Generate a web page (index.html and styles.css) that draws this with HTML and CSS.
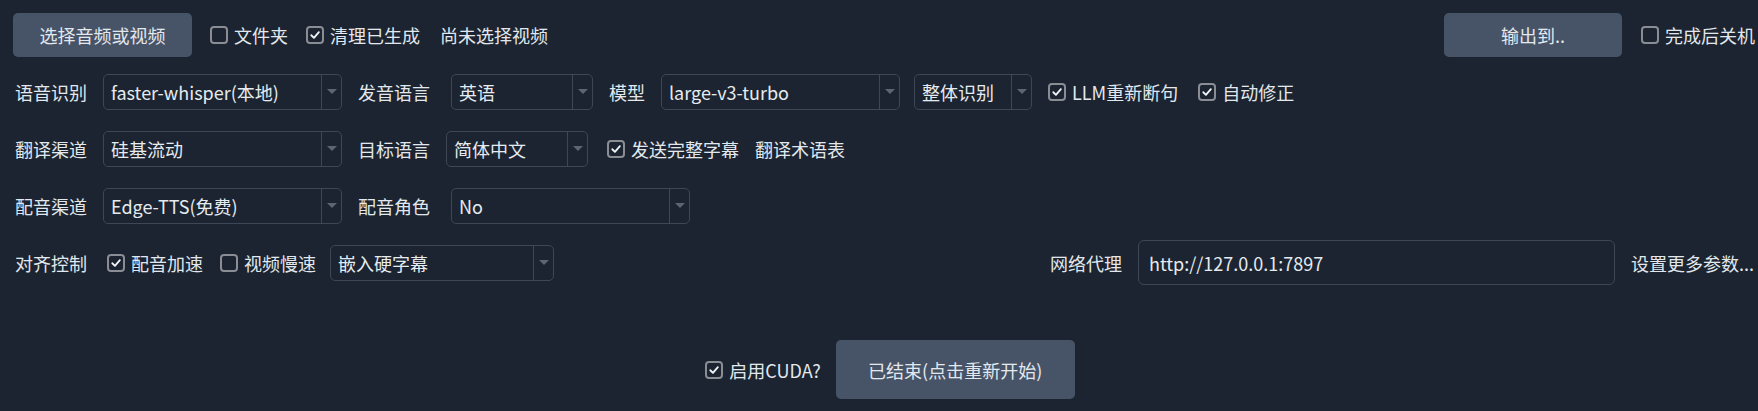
FILE: index.html
```html
<!DOCTYPE html>
<html lang="zh-CN">
<head>
  <meta charset="UTF-8">
  <meta name="viewport" content="width=device-width, initial-scale=1.0">
  <title>视频翻译配音</title>
  <link rel="stylesheet" href="styles.css">
</head>
<body>
<div class="panel">
  <div class="row">
    <div class="group">
      <button class="btn btn-pick">选择音频或视频</button>
      <label class="check"><span class="box"></span>文件夹</label>
      <label class="check"><span class="box"><svg viewBox="0 0 17 17"><path d="M4 8.8l3.2 3.2 6-7"/></svg></span>清理已生成</label>
      <span class="status">尚未选择视频</span>
    </div>
    <div class="group group-right">
      <button class="btn btn-out">输出到..</button>
      <label class="check"><span class="box"></span>完成后关机</label>
    </div>
  </div>

  <div class="row">
    <span class="lbl">语音识别</span>
    <div class="combo combo-main"><span class="combo-text">faster-whisper(本地)</span><span class="combo-arrow"></span></div>
    <span class="lbl lbl-wide">发音语言</span>
    <div class="combo combo-lang"><span class="combo-text">英语</span><span class="combo-arrow"></span></div>
    <span class="lbl">模型</span>
    <div class="combo combo-main"><span class="combo-text">large-v3-turbo</span><span class="combo-arrow"></span></div>
    <div class="combo combo-mode"><span class="combo-text">整体识别</span><span class="combo-arrow"></span></div>
    <label class="check"><span class="box"><svg viewBox="0 0 17 17"><path d="M4 8.8l3.2 3.2 6-7"/></svg></span>LLM重新断句</label>
    <label class="check check-wide"><span class="box"><svg viewBox="0 0 17 17"><path d="M4 8.8l3.2 3.2 6-7"/></svg></span>自动修正</label>
  </div>

  <div class="row">
    <span class="lbl">翻译渠道</span>
    <div class="combo combo-main"><span class="combo-text">硅基流动</span><span class="combo-arrow"></span></div>
    <span class="lbl">目标语言</span>
    <div class="combo combo-lang"><span class="combo-text">简体中文</span><span class="combo-arrow"></span></div>
    <label class="check check-gap"><span class="box"><svg viewBox="0 0 17 17"><path d="M4 8.8l3.2 3.2 6-7"/></svg></span>发送完整字幕</label>
    <span class="link">翻译术语表</span>
  </div>

  <div class="row">
    <span class="lbl">配音渠道</span>
    <div class="combo combo-main"><span class="combo-text">Edge-TTS(免费)</span><span class="combo-arrow"></span></div>
    <span class="lbl lbl-wide">配音角色</span>
    <div class="combo combo-main"><span class="combo-text">No</span><span class="combo-arrow"></span></div>
  </div>

  <div class="row">
    <div class="group group-align">
      <span class="lbl">对齐控制</span>
      <label class="check check-gap"><span class="box"><svg viewBox="0 0 17 17"><path d="M4 8.8l3.2 3.2 6-7"/></svg></span>配音加速</label>
      <label class="check"><span class="box"></span>视频慢速</label>
      <div class="combo combo-sub"><span class="combo-text">嵌入硬字幕</span><span class="combo-arrow"></span></div>
    </div>
    <div class="group group-proxy">
      <span class="lbl">网络代理</span>
      <div class="field">http://127.0.0.1:7897</div>
      <span class="link">设置更多参数...</span>
    </div>
  </div>

  <div class="row row-bottom">
    <label class="check"><span class="box"><svg viewBox="0 0 17 17"><path d="M4 8.8l3.2 3.2 6-7"/></svg></span>启用CUDA?</label>
    <button class="btn btn-start">已结束(点击重新开始)</button>
  </div>
</div>
</body>
</html>
```

FILE: styles.css
```css
body {
  margin: 0;
  background-color: #1b2430;
  color: #e2e8ee;
  font-family: "Noto Sans CJK SC", "Noto Sans", sans-serif;
  font-size: 18px;
}
.panel {
  display: flex;
  flex-direction: column;
  gap: 12px;
  padding: 12px 3px 0 15px;
}
.row {
  display: flex;
  align-items: center;
  gap: 16px;
  height: 45px;
}
.group {
  display: flex;
  align-items: center;
  gap: 18px;
}
.group-right {
  margin-left: auto;
  gap: 19px;
}
.btn {
  font-family: inherit;
  font-size: 18px;
  color: #e3e8ee;
  background-color: #475467;
  border: none;
  border-radius: 5px;
  height: 44px;
  padding: 0;
  cursor: pointer;
}
.btn-pick {
  width: 179px;
  margin-left: -2px;
}
.btn-out {
  width: 178px;
}
.btn-start {
  width: 239px;
  height: 59px;
}
.check {
  display: flex;
  align-items: center;
  gap: 6px;
  white-space: nowrap;
}
.check-gap {
  margin-left: 3px;
}
.check-wide {
  margin-left: 4px;
}
.box {
  box-sizing: border-box;
  flex: none;
  width: 18px;
  height: 18px;
  border: 2px solid #8a8e94;
  border-radius: 4px;
  display: flex;
  align-items: center;
  justify-content: center;
}
.box svg {
  width: 14px;
  height: 14px;
  fill: none;
  stroke: #f1f4f7;
  stroke-width: 2.2;
  stroke-linecap: round;
  stroke-linejoin: round;
}
.status {
  margin-left: 2px;
}
.lbl {
  width: 72px;
  white-space: nowrap;
}
.lbl:nth-of-type(3) {
  width: auto;
}
.lbl-wide {
  width: 77px;
}
.combo {
  box-sizing: border-box;
  flex: none;
  display: flex;
  height: 36px;
  border: 1.5px solid #3d4756;
  border-radius: 5px;
}
.combo-main {
  width: 239px;
}
.combo-lang {
  width: 142px;
}
.combo-mode {
  width: 118px;
  margin-left: -2px;
}
.combo-sub {
  width: 224px;
  margin-left: -3px;
}
.combo-text {
  flex: 1;
  display: flex;
  align-items: center;
  padding-left: 7px;
  white-space: nowrap;
  overflow: hidden;
  color: #e6ebf0;
}
.combo-arrow {
  width: 19px;
  border-left: 1.5px solid #3d4756;
  display: flex;
  align-items: center;
  justify-content: center;
}
.combo-arrow::after {
  content: "";
  border-left: 5px solid transparent;
  border-right: 5px solid transparent;
  border-top: 5px solid #5b6573;
}
.link {
  white-space: nowrap;
}
.group-align {
  gap: 17px;
}
.group-proxy {
  margin-left: auto;
  margin-right: 1px;
  gap: 16px;
}
.field {
  box-sizing: border-box;
  width: 477px;
  height: 45px;
  border: 1.5px solid #3d4756;
  border-radius: 6px;
  display: flex;
  align-items: center;
  padding-left: 10px;
  color: #e6ebf0;
}
.row-bottom {
  justify-content: center;
  gap: 15px;
  height: 59px;
  margin-top: 43px;
  padding-left: 10px;
}
```
